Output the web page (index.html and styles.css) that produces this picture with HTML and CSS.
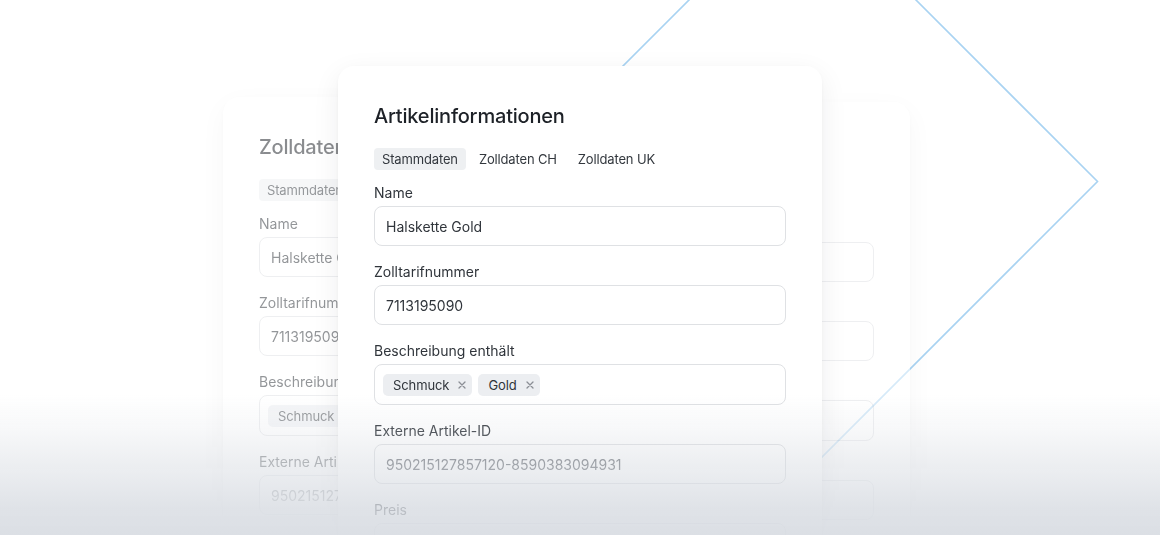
FILE: index.html
```html
<!DOCTYPE html>
<html lang="de">
<head>
<meta charset="utf-8">
<title>Artikelinformationen</title>
<link rel="stylesheet" href="styles.css">
</head>
<body>
<div class="stage">
  <svg class="diamond" width="1160" height="535" viewBox="0 0 1160 535" aria-hidden="true">
    <polygon points="802.5,-113.5 1097.5,181.5 802.5,476.5 507.5,181.5" fill="none" stroke="#a9d3f2" stroke-width="1.6"/>
  </svg>

  <section class="card card-back card-left">
    <h2 class="card-title">Zolldaten CH</h2>
    <nav class="tabs"><span class="tab tab-active">Stammdaten</span><span class="tab">Zolldaten CH</span><span class="tab">Zolldaten UK</span></nav>
    <div class="field"><span class="field-label">Name</span><div class="input">Halskette Gold</div></div>
    <div class="field"><span class="field-label">Zolltarifnummer</span><div class="input">7113195090</div></div>
    <div class="field"><span class="field-label">Beschreibung enthält</span><div class="input input-tags"><span class="tag">Schmuck<svg class="tag-x" width="8" height="8" viewBox="0 0 8 8"><path d="M1 1L7 7M7 1L1 7"/></svg></span><span class="tag">Gold<svg class="tag-x" width="8" height="8" viewBox="0 0 8 8"><path d="M1 1L7 7M7 1L1 7"/></svg></span></div></div>
    <div class="field"><span class="field-label">Externe Artikel-ID</span><div class="input input-muted">950215127857120-8590383094931</div></div>
    <div class="field"><span class="field-label">Preis</span><div class="input"></div></div>
  </section>

  <section class="card card-back card-right">
    <h2 class="card-title">Zolldaten UK</h2>
    <nav class="tabs"><span class="tab tab-active">Stammdaten</span><span class="tab">Zolldaten CH</span><span class="tab">Zolldaten UK</span></nav>
    <div class="field"><span class="field-label">Name</span><div class="input">Halskette Gold</div></div>
    <div class="field"><span class="field-label">Zolltarifnummer</span><div class="input">7113195090</div></div>
    <div class="field"><span class="field-label">Beschreibung enthält</span><div class="input input-tags"><span class="tag">Schmuck<svg class="tag-x" width="8" height="8" viewBox="0 0 8 8"><path d="M1 1L7 7M7 1L1 7"/></svg></span></div></div>
    <div class="field"><span class="field-label">Externe Artikel-ID</span><div class="input input-muted">950215127857120-8590383094931</div></div>
    <div class="field"><span class="field-label">Preis</span><div class="input"></div></div>
  </section>

  <section class="card card-front">
    <h2 class="card-title">Artikelinformationen</h2>
    <nav class="tabs"><span class="tab tab-active">Stammdaten</span><span class="tab">Zolldaten CH</span><span class="tab">Zolldaten UK</span></nav>
    <div class="field"><span class="field-label">Name</span><div class="input">Halskette Gold</div></div>
    <div class="field"><span class="field-label">Zolltarifnummer</span><div class="input">7113195090</div></div>
    <div class="field"><span class="field-label">Beschreibung enthält</span><div class="input input-tags"><span class="tag">Schmuck<svg class="tag-x" width="8" height="8" viewBox="0 0 8 8"><path d="M1 1L7 7M7 1L1 7"/></svg></span><span class="tag">Gold<svg class="tag-x" width="8" height="8" viewBox="0 0 8 8"><path d="M1 1L7 7M7 1L1 7"/></svg></span></div></div>
    <div class="field"><span class="field-label">Externe Artikel-ID</span><div class="input input-muted">950215127857120-8590383094931</div></div>
    <div class="field"><span class="field-label">Preis</span><div class="input"></div></div>
  </section>

  <div class="fade"></div>
</div>
</body>
</html>
```

FILE: styles.css
```css
* { box-sizing: border-box; }
html, body { margin: 0; padding: 0; }
body {
  width: 1160px;
  height: 535px;
  overflow: hidden;
  background: #ffffff;
  font-family: Inter, "Noto Sans", "Liberation Sans", sans-serif;
}
.stage {
  position: relative;
  width: 1160px;
  height: 535px;
  overflow: hidden;
}
.diamond {
  position: absolute;
  left: 0;
  top: 0;
}
.card {
  position: absolute;
  width: 484px;
  height: 560px;
  background: #ffffff;
  border-radius: 16px;
  padding: 36px 36px 0;
  box-shadow: 0 1px 4px rgba(16, 24, 40, 0.04), 0 8px 28px rgba(16, 24, 40, 0.07);
}
.card-back { opacity: 0.52; }
.card-left { left: 223px; top: 97px; }
.card-right { left: 426px; top: 102px; }
.card-front { left: 338px; top: 66px; }

.card-title {
  margin: 0;
  font-size: 20px;
  line-height: 28px;
  font-weight: 500;
  letter-spacing: -0.2px;
  color: #1d2127;
}
.tabs {
  display: flex;
  gap: 5px;
  margin: 18px 0 13px;
}
.tab {
  padding: 0 8px;
  font-size: 13px;
  line-height: 22px;
  letter-spacing: -0.15px;
  color: #33383e;
  border-radius: 4px;
}
.tab-active { background: #eef0f2; }

.field {
  display: flex;
  flex-direction: column;
  gap: 3px;
  margin-bottom: 16px;
}
.field-label {
  font-size: 14px;
  line-height: 20px;
  color: #30353b;
}
.input {
  height: 40px;
  border: 1px solid #dfe1e4;
  border-radius: 8px;
  padding: 0 11px;
  display: flex;
  align-items: center;
  font-size: 14px;
  color: #30353b;
  background: #ffffff;
}
.input-tags {
  height: 41px;
  padding: 0 8px;
  gap: 6px;
}
.input-muted { color: #6f7379; }
.tag {
  display: flex;
  align-items: center;
  gap: 9px;
  height: 22px;
  padding: 0 6px 0 10px;
  background: #eceef1;
  border-radius: 5px;
  font-size: 13px;
  letter-spacing: -0.1px;
  color: #30353b;
}
.tag-x path {
  stroke: #8b8f95;
  stroke-width: 1.3;
  stroke-linecap: round;
}

.fade {
  position: absolute;
  left: 0;
  right: 0;
  top: 395px;
  height: 140px;
  background: linear-gradient(to bottom,
    rgba(216, 220, 226, 0) 0%,
    rgba(216, 220, 226, 0.2) 25%,
    rgba(216, 220, 226, 0.8) 80%,
    rgba(216, 220, 226, 0.92) 100%);
  pointer-events: none;
}
```
